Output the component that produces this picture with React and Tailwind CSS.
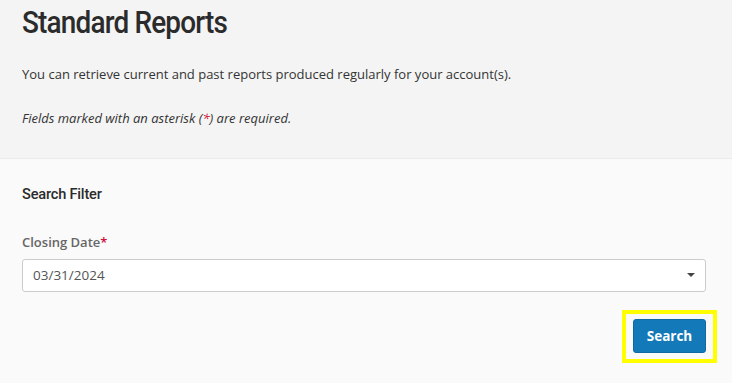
import React, { useState } from "react";

const openSans = { fontFamily: '"Open Sans", "Liberation Sans", sans-serif' };

export default function App() {
  const [closingDate, setClosingDate] = useState("03/31/2024");

  return (
    <div className="w-[732px] h-[383px] overflow-hidden bg-[#fafafa] text-[#333]" style={openSans}>
      {/* header */}
      <div className="h-[159px] bg-[#f4f4f4] border-b border-[#ebebeb] px-[22px] pt-[3px]">
        <h1 className="font-['Roboto',sans-serif] font-medium text-[31px] leading-[40px] tracking-[-0.9px] text-[#2b2b2b] scale-x-[0.9] origin-left">
          Standard Reports
        </h1>
        <p className="mt-[22px] text-[13px] leading-[18px] text-[#333]">
          You can retrieve current and past reports produced regularly for your account(s).
        </p>
        <p className="mt-[26px] text-[13px] leading-[18px] italic text-[#333]">
          Fields marked with an asterisk (<span className="text-[#d0103a]">*</span>) are required.
        </p>
      </div>

      {/* filter */}
      <div className="px-[22px] pt-[25px]">
        <h2 className="font-['Roboto',sans-serif] font-medium text-[15.5px] leading-[20px] tracking-[-0.2px] text-[#2b2b2b] scale-x-[0.94] origin-left">
          Search Filter
        </h2>
        <label className="block mt-[29px] text-[13px] leading-[18px] font-semibold text-[#666]">
          Closing Date<span className="text-[#d0103a]">*</span>
        </label>
        <div className="relative mt-[8px] w-[684px] h-[33px]">
          <select
            value={closingDate}
            onChange={(e) => setClosingDate(e.target.value)}
            className="appearance-none w-full h-full bg-white border border-[#cccccc] rounded-[3px] pl-[10px] text-[13.5px] text-[#555] outline-none"
          >
            <option>03/31/2024</option>
            <option>02/29/2024</option>
            <option>01/31/2024</option>
          </select>
          <span className="pointer-events-none absolute right-[11px] top-[14px] w-0 h-0 border-l-[4px] border-r-[4px] border-t-[4px] border-l-transparent border-r-transparent border-t-[#444]" />
        </div>
        <div className="flex justify-end mt-[18px] mr-[-7px]">
          <div className="border-[4px] border-[#ffff00] pt-[5px] pb-[6px] px-[7px]">
            <button className="w-[73px] h-[34px] rounded-[3px] bg-[#1479b8] border border-[#0f6aa3] text-white text-[13.5px] font-bold">
              Search
            </button>
          </div>
        </div>
      </div>
    </div>
  );
}
